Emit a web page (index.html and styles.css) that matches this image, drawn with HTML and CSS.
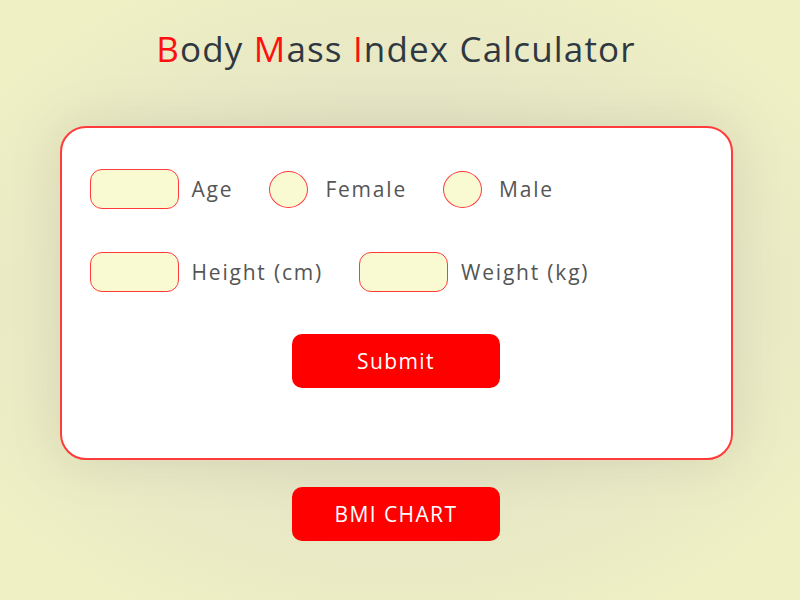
FILE: index.html
```html
<!DOCTYPE html>
<html>
<head>
<meta charset="utf-8">
<link rel="stylesheet" href="styles.css">
</head>
<body>
<div class="page">
  <h1 class="title"><span class="red">B</span>ody <span class="red">M</span>ass <span class="red">I</span>ndex Calculator</h1>
  <form class="card">
    <div class="row">
      <input class="box" type="text">
      <label class="lbl">Age</label>
      <span class="radio"></span>
      <label class="lbl">Female</label>
      <span class="radio"></span>
      <label class="lbl">Male</label>
    </div>
    <div class="row row2">
      <input class="box" type="text">
      <label class="lbl">Height (cm)</label>
      <input class="box" type="text">
      <label class="lbl">Weight (kg)</label>
    </div>
    <div class="actions">
      <button type="button" class="btn">Submit</button>
    </div>
  </form>
  <button type="button" class="btn chart">BMI CHART</button>
</div>
</body>
</html>
```

FILE: styles.css
```css
html, body {
  margin: 0;
  height: 100%;
}
body {
  background: radial-gradient(ellipse 500px 360px at 396px 300px, #dcdcc6 0%, #e4e4c6 45%, #eff0c4 100%);
  font-family: "Open Sans", "Lato", sans-serif;
  color: #444;
  overflow: hidden;
}
.page {
  display: flex;
  flex-direction: column;
  align-items: center;
  padding-top: 24px;
  padding-right: 8px;
}
.title {
  margin: 0;
  font-weight: 400;
  font-size: 35px;
  line-height: 50px;
  color: #2f3840;
  letter-spacing: 1.15px;
}
.red { color: #ff1010; }
.card {
  margin-top: 52px;
  width: 613px;
  height: 290px;
  background: #fff;
  border: 2px solid #ff3b3b;
  border-radius: 26px;
  padding: 40px 28px 0 28px;
  box-shadow: 0 0 50px rgba(120,120,100,0.18);
  display: flex;
  flex-direction: column;
}
.row {
  display: flex;
  align-items: center;
  height: 42px;
}
.row2 { margin-top: 41px; }
.box {
  width: 87px;
  height: 38px;
  box-sizing: content-box;
  padding: 0;
  margin: 0 13px 0 0;
  border: 1.5px solid #ff3b3b;
  border-radius: 12px;
  background: #fafad2;
  outline: none;
}
.radio {
  width: 37px;
  height: 35px;
  border: 1.5px solid #ff3b3b;
  border-radius: 50%;
  background: #fafad2;
  margin-right: 17px;
}
.lbl {
  font-size: 21px;
  letter-spacing: 1.8px;
  color: #555;
  margin-right: 36px;
}
.actions {
  display: flex;
  justify-content: center;
  margin-top: 41px;
}
.btn {
  width: 208px;
  height: 54px;
  border: none;
  border-radius: 10px;
  background: #ff0000;
  color: #fff;
  font-family: "Open Sans", "Lato", sans-serif;
  font-size: 21px;
  letter-spacing: 1.4px;
}
.chart {
  margin-top: 27px;
}
```
